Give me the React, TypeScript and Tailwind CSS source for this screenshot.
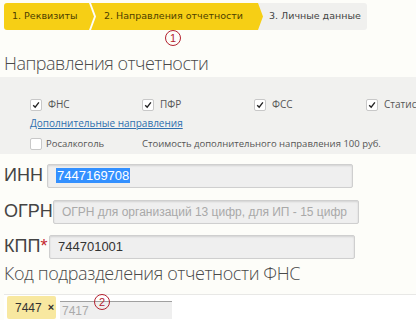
import React from 'react';

const YELLOW = 'bg-[#f6cf15]';

function Check({ checked }: { checked?: boolean }) {
    return (
        <span className="flex h-[12px] w-[12px] shrink-0 items-center justify-center rounded-[2px] border border-[#c8c8c8] bg-white">
            {checked && (
                <svg viewBox="0 0 10 10" className="h-[8px] w-[8px]">
                    <path d="M1.5 5.2 L4 7.8 L8.6 1.8" fill="none" stroke="#222" strokeWidth="1.7" />
                </svg>
            )}
        </span>
    );
}

function Marker({ n }: { n: number }) {
    return (
        <span className="absolute flex h-[16px] w-[16px] items-center justify-center rounded-full border-[1.5px] border-[#b3212f] text-[11px] leading-none text-[#b3212f] font-['Liberation_Sans',sans-serif]">
            {n}
        </span>
    );
}

export default function App() {
    const dirs = ['ФНС', 'ПФР', 'ФСС', 'Статистика'];
    return (
        <div className="relative h-[320px] w-[416px] overflow-hidden bg-[#fdfdf9] font-['Open_Sans',sans-serif] text-[#555]">
            {/* steps */}
            <div className="flex h-[27px] pl-[4px] pt-[3px] box-content font-['DejaVu_Sans',sans-serif] text-[9.5px]">
                <div className={`${YELLOW} flex w-[90px] items-center rounded-l-[3px] pl-[8px] text-[#4d4000] [clip-path:polygon(0_0,85px_0,90px_50%,85px_100%,0_100%)]`}>
                    1. Реквизиты
                </div>
                <div className={`${YELLOW} relative z-10 -ml-[3px] flex w-[172px] items-center pl-[13px] text-[#4d4000] [clip-path:polygon(0_0,167px_0,172px_50%,167px_100%,0_100%,5px_50%)]`}>
                    2. Направления отчетности
                </div>
                <div className="-ml-[6px] flex w-[110px] items-center rounded-r-[3px] bg-[#f0f0ee] pl-[12px] text-[#444]">
                    3. Личные данные
                </div>
            </div>
            <div className="relative h-0">
                <div className="absolute left-[165px] top-[0px]">
                    <Marker n={1} />
                </div>
            </div>

            <h1 className="ml-[4px] mt-[21px] text-[18px] font-light leading-[24px] tracking-[-0.5px] text-[#4a4a4a]">Направления отчетности</h1>

            {/* directions panel */}
            <div className="mt-[2px] h-[77px] bg-[#f1f1ef] pl-[30px] pt-[20px] text-[10px]">
                <div className="flex">
                    {dirs.map(d => (
                        <label key={d} className="flex w-[112px] shrink-0 items-center gap-[6px] whitespace-nowrap">
                            <Check checked />
                            <span>{d}</span>
                        </label>
                    ))}
                </div>
                <a className="mt-[4px] block w-fit text-[10px] leading-[14px] text-[#2f6fae] underline">Дополнительные направления</a>
                <div className="mt-[7px] flex items-center text-[9.5px]">
                    <label className="flex w-[112px] items-center gap-[4px]">
                        <Check />
                        <span>Росалкоголь</span>
                    </label>
                    <span>Стоимость дополнительного направления 100 руб.</span>
                </div>
            </div>

            {/* fields */}
            <div className="font-['Liberation_Sans',sans-serif]">
                <div className="mt-[8px] flex items-center">
                    <span className="w-[47px] pl-[4px] text-[18px] text-[#444]">ИНН</span>
                    <div className="flex h-[24px] w-[306px] items-center rounded-[2px] border border-[#cfcfcf] bg-[#efefef] pl-[8px] shadow-[inset_0_1px_2px_rgba(0,0,0,0.12)]">
                        <span className="bg-[#3390ff] px-[1px] text-[13px] leading-[15px] text-white">7447169708</span>
                    </div>
                </div>
                <div className="mt-[9px] flex items-center">
                    <span className="w-[53px] pl-[4px] text-[18px] text-[#444]">ОГРН</span>
                    <div className="flex h-[24px] w-[306px] items-center rounded-[2px] border border-[#cfcfcf] bg-[#efefef] pl-[8px] shadow-[inset_0_1px_2px_rgba(0,0,0,0.12)]">
                        <span className="text-[12px] text-[#a9a9a9]">ОГРН для организаций 13 цифр, для ИП - 15 цифр</span>
                    </div>
                </div>
                <div className="mt-[8px] flex items-center">
                    <span className="w-[49px] pl-[4px] text-[18px] text-[#444]">
                        КПП<span className="text-[#c4272f]">*</span>
                    </span>
                    <div className="flex h-[24px] w-[306px] items-center rounded-[2px] border border-[#cfcfcf] bg-[#efefef] pl-[8px] shadow-[inset_0_1px_2px_rgba(0,0,0,0.12)]">
                        <span className="text-[13px] text-[#333]">744701001</span>
                    </div>
                </div>
            </div>

            <h2 className="ml-[4px] mt-[1px] text-[18px] font-light leading-[24px] tracking-[-0.4px] text-[#4a4a4a]">Код подразделения отчетности ФНС</h2>

            {/* tags */}
            <div className="ml-[4px] mt-[9px] flex h-[33px] items-start gap-[4px] border-y border-[#e8e8e6] bg-white pl-[3px] pt-[1px] font-['Liberation_Sans',sans-serif]">
                <div className="flex h-[23px] w-[49px] items-center gap-[6px] rounded-[2px] bg-[#f8e8a0] pl-[8px] text-[12px] text-[#333]">
                    <span>7447</span>
                    <span className="text-[11px] font-bold">×</span>
                </div>
                <div className="relative mt-[5px] flex h-[18px] w-[112px] items-center border-t border-[#a0a0a0] bg-[#efefef] pl-[2px] text-[12px] text-[#aaa]">
                    7417
                    <div className="absolute left-[34px] top-[-8px]">
                        <Marker n={2} />
                    </div>
                </div>
            </div>
        </div>
    );
}
